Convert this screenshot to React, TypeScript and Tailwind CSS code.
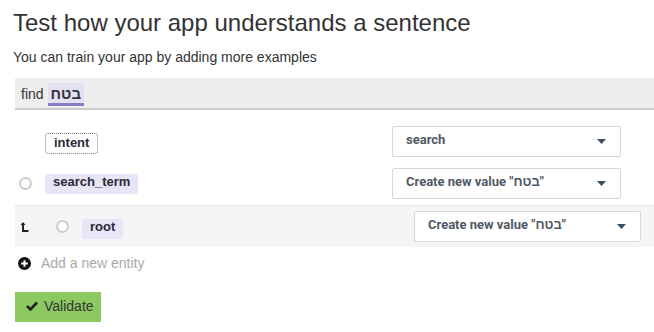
import * as React from "react";

interface EntityRowProps {
  label: string;
  value: string;
}

const Caret = () => (
  <svg width="9" height="5" viewBox="0 0 9 5" className="shrink-0">
    <path d="M0 0 L9 0 L4.5 5 Z" fill="#3b4c5e" />
  </svg>
);

const Dropdown: React.FC<{ value: string; className?: string }> = ({
  value,
  className,
}) => (
  <div
    className={`h-[31px] flex items-center justify-between pl-[13px] pr-[14px] bg-white border border-[#d3d8de] rounded-[2px] ${className}`}
  >
    <span className="font-['Roboto',sans-serif] font-bold text-[13px] text-[#4f5966] -mt-[3px]">
      {value}
    </span>
    <Caret />
  </div>
);

const Radio = () => (
  <span className="block w-[13px] h-[13px] rounded-full border-2 border-[#cccccc] bg-white shrink-0" />
);

const Chip: React.FC<{ label: string; dotted?: boolean }> = ({ label, dotted }) => (
  <span
    className={`inline-flex items-start px-[8px] rounded-[3px] font-bold text-[13px] leading-[16px] text-[#2b2b33] ${
      dotted
        ? "h-[21px] pt-[1px] border border-dotted border-[#777] bg-white"
        : "h-[20px] pt-0 bg-[#e8e5f9]"
    }`}
  >
    {label}
  </span>
);

const LevelUp = () => (
  <svg width="9" height="10" viewBox="0 0 9 10" className="shrink-0">
    <path d="M3 9 V1.5" stroke="#222" strokeWidth="2" fill="none" />
    <path d="M0.5 3 L3 0 L5.5 3 Z" fill="#222" />
    <path d="M2 9 H8.5" stroke="#222" strokeWidth="2" fill="none" />
  </svg>
);

const entities: EntityRowProps[] = [
  { label: "search_term", value: 'Create new value "בטח"' },
];

export default function App() {
  return (
    <div className="w-[654px] h-[332px] overflow-hidden bg-white font-['Liberation_Sans',Arial,sans-serif] text-[#333]">
      <h1 className="pl-[13px] pt-[8px] leading-[30px] text-[24px] text-[#333]">
        Test how your app understands a sentence
      </h1>
      <p className="pl-[13px] mt-[9px] leading-[20px] text-[14px] text-[#333]">
        You can train your app by adding more examples
      </p>

      <div className="ml-[15px] mt-[11px]">
        {/**
         * Sentence bar
         */}
        <div className="h-[32px] bg-[#eeeeee] border-b-2 border-[#cccccc] flex items-start pl-[6px] pt-[5px]">
          <span className="text-[14px] leading-[20px] mt-[1px] text-[#333]">find</span>
          <span className="ml-[4px] flex flex-col">
            <span className="bg-[#e3e0f4] px-[3px] text-[15px] leading-[21px] font-bold text-[#333]">
              בטח
            </span>
            <span className="h-[3px] bg-[#8a7cc8] -mt-[1px]" />
          </span>
        </div>

        {/**
         * Intent row
         */}
        <div className="flex items-center justify-between pt-[16px] pb-[5px]">
          <div className="pl-[30px]">
            <Chip label="intent" dotted />
          </div>
          <Dropdown value="search" className="w-[229px] mr-[33px]" />
        </div>

        {entities.map((entity, index) => (
          <div
            className="flex items-center justify-between pt-[6px] pb-[6px]"
            key={index}
          >
            <div className="flex items-center pl-[4px] gap-[13px]">
              <Radio />
              <Chip label={entity.label} />
            </div>
            <Dropdown value={entity.value} className="w-[229px] mr-[33px]" />
          </div>
        ))}

        {/**
         * Nested entity
         */}
        <div className="flex items-center justify-between bg-[#f4f5f7] border-t border-[#e6e8eb] pt-[5px] pb-[5px]">
          <div className="flex items-center pl-[5px]">
            <LevelUp />
            <span className="ml-[27px]">
              <Radio />
            </span>
            <span className="ml-[13px]">
              <Chip label="root" />
            </span>
          </div>
          <Dropdown value={'Create new value "בטח"'} className="w-[227px] mr-[13px]" />
        </div>

        <div className="flex items-center h-[18px] mt-[7px] pl-[3px]">
          <svg width="13" height="13" viewBox="0 0 13 13" className="shrink-0">
            <circle cx="6.5" cy="6.5" r="6.5" fill="#111" />
            <path d="M6.5 3.2 V9.8 M3.2 6.5 H9.8" stroke="#fff" strokeWidth="2" />
          </svg>
          <span className="ml-[10px] text-[14px] text-[#aaaaaa]">Add a new entity</span>
        </div>

        <button className="mt-[20px] h-[30px] w-[86px] bg-[#8dc961] flex items-center pl-[11px] pb-[2px] text-[14px] text-[#333]">
          <svg width="12" height="10" viewBox="0 0 12 10" className="shrink-0">
            <path d="M1 5 L4.5 8.5 L11 1.5" stroke="#222" strokeWidth="2.6" fill="none" />
          </svg>
          <span className="ml-[6px]">Validate</span>
        </button>
      </div>
    </div>
  );
}
